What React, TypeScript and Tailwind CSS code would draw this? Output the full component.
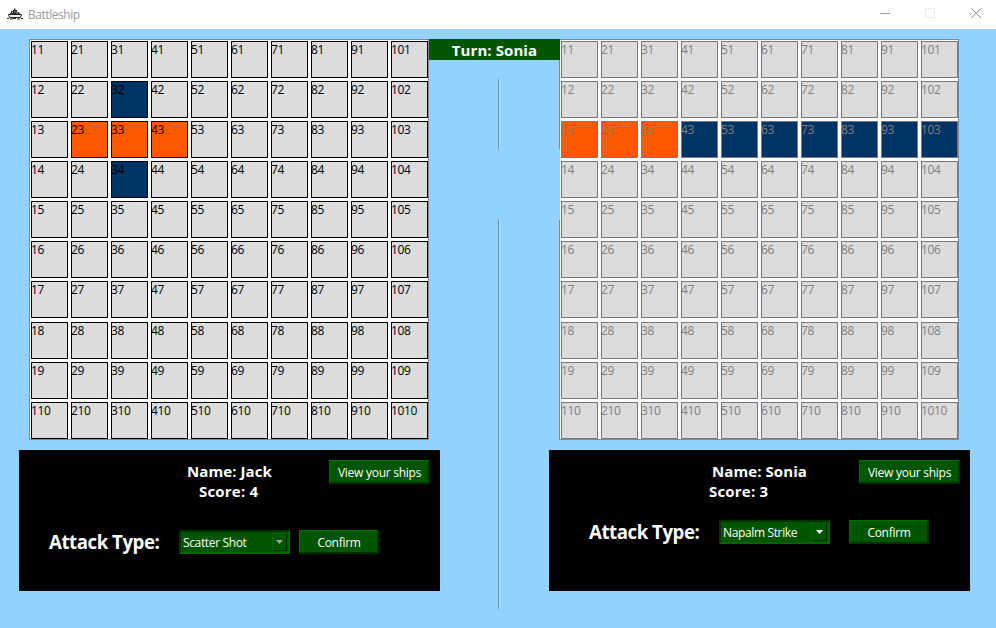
import React from "react";

const cols = [1, 2, 3, 4, 5, 6, 7, 8, 9, 10];
const upper = [1, 2, 3, 4, 5, 6, 7];
const lower = [8, 9, 10];

const HIT = "bg-[#ff5a00]";
const MISS = "bg-[#003366]";

type Marks = Record<string, string>;

const jackMarks: Marks = { "32": MISS, "34": MISS, "23": HIT, "33": HIT, "43": HIT };
const soniaMarks: Marks = {
  "13": HIT, "23": HIT, "33": HIT, "43": MISS, "53": MISS,
  "63": MISS, "73": MISS, "83": MISS, "93": MISS, "103": MISS,
};

function Board({ marks, disabled }: { marks: Marks; disabled?: boolean }) {
  const tone = disabled ? "border-[#787878] text-[#808080]" : "border-black text-black";
  const row = (r: number) => (
    <div key={r} className="flex gap-[3px]">
      {cols.map((c) => {
        const id = `${c}${r}`;
        const mark = marks[id];
        const edge = mark === HIT && disabled ? "border-[#787878] text-[#8c7a50]" : tone;
        return (
          <div
            key={c}
            className={`h-[37px] w-[37px] border -indent-px text-[12px] leading-[16px] tracking-[-0.4px] whitespace-nowrap ${edge} ${mark ?? "bg-[#dcdcdc]"}`}
          >
            {id}
          </div>
        );
      })}
    </div>
  );
  return (
    <div className="ml-[10px] flex h-[401px] w-[400px] flex-col gap-1 border border-[#828790] bg-white pt-px pl-px">
      <div className="flex flex-col gap-[3px]">{upper.map(row)}</div>
      <div className="flex flex-col gap-[3px]">{lower.map(row)}</div>
    </div>
  );
}

function Button({ children, className }: { children: React.ReactNode; className: string }) {
  return (
    <button
      className={`flex h-6 items-center justify-center border-t border-l border-r-2 border-b-2 border-t-[#006e00] border-l-[#006e00] border-r-[#003200] border-b-[#003200] bg-[#005500] pt-[3px] pl-px text-[12px] whitespace-nowrap text-white ${className}`}
    >
      {children}
    </button>
  );
}

function Combo({ value, muted }: { value: string; muted?: boolean }) {
  return (
    <div className="flex h-6 w-[111px] border-2 border-t-[#003200] border-r-[#006400] border-b-[#006400] border-l-[#003200] bg-[#005500] text-white">
      <span className="w-[91px] pt-[3px] pl-[2px] text-[12px] leading-[16px] tracking-[-0.36px] whitespace-nowrap">{value}</span>
      <span className="mt-[1px] flex h-[18px] w-[15px] items-center justify-center border border-t-[#006400] border-r-[#002800] border-b-[#002800] border-l-[#006400]">
        <svg width="7" height="4" viewBox="0 0 7 4" fill={muted ? "#a0a0a0" : "#ffffff"}>
          <path d="M0 0H7L3.5 4Z" />
        </svg>
      </span>
    </div>
  );
}

export default function App() {
  return (
    <div className="h-[628px] w-[996px] overflow-hidden bg-[#93d2fe] font-['Open_Sans','Noto_Sans',sans-serif]">
      <header className="flex h-[29px] items-center bg-white text-[#999999]">
        <svg className="ml-[7px] mb-[2px]" width="16" height="12" viewBox="0 0 16 12">
          <path d="M3 7V5H4V3H6V2H7V0.5H8.5V2H10V4H12V5H13V7Z" fill="#333333" />
          <path d="M5 4.5H6M7 3.5H8M9 5H11" stroke="#aaaaaa" />
          <path d="M1.5 6.5H14.5L13.5 9.5H2.5Z" fill="#eeeeee" stroke="#222222" />
          <path d="M0 10.5H2M3 11H6M6 10.5H9M10 11H13M14 10.5H16" stroke="#222222" />
        </svg>
        <span className="ml-[5px] text-[12px] leading-[16px] tracking-[-0.45px]">Battleship</span>
        <svg className="ml-auto mr-[14px] -mt-[3px]" width="102" height="12" viewBox="0 0 102 12" fill="none">
          <path d="M0 6.5H10" stroke="#999999" />
          <path d="M45.5 1.5H54.5V10.5H45.5Z" stroke="#eaeaea" />
          <path d="M91.5 1.5L101 11M101 1.5L91.5 11" stroke="#888888" />
        </svg>
      </header>

      <main className="flex pt-[10px] pl-[19px]">
        <section className="w-[421px]">
          <Board marks={jackMarks} />
          <div className="mt-[10px] h-[141px] bg-black pt-[10px] text-white">
            <div className="flex">
              <div className="ml-[168px] w-[142px] pt-px text-[15px] leading-5 font-bold tracking-[0.08px] whitespace-nowrap">
                <p>Name: Jack</p>
                <p className="pl-[12px] tracking-[0.2px]">Score: 4</p>
              </div>
              <Button className="w-[101px] tracking-[-0.26px]">View your ships</Button>
            </div>
            <div className="mt-[29px] flex">
              <span className="ml-[30px] w-[130px] text-[18.67px] leading-6 font-bold tracking-[-0.46px] whitespace-nowrap">Attack Type:</span>
              <Combo value="Scatter Shot" muted />
              <Button className="ml-[9px] w-[80px] tracking-[-0.3px]">Confirm</Button>
            </div>
          </div>
        </section>

        <section className="z-10 w-[109px]">
          <div className="-ml-[11px] h-[21px] w-[131px] bg-[#005500] pt-px text-center text-[15px] leading-[21px] font-bold tracking-[0.08px] text-white">
            Turn: Sonia
          </div>
          <div className="mt-[19px] ml-[58px] h-[70px] w-[2px] border-l border-[#648ea9] bg-[#b4e0fe]" />
          <div className="-mr-[11px] ml-auto h-[71px] w-px bg-[#93d2fe]" />
          <div className="ml-[58px] h-[389px] w-[2px] border-l border-[#648ea9] bg-[#b4e0fe]" />
        </section>

        <section className="w-[421px]">
          <Board marks={soniaMarks} disabled />
          <div className="mt-[10px] h-[141px] bg-black pt-[10px] text-white">
            <div className="flex">
              <div className="ml-[160px] w-[150px] pt-px text-[15px] leading-5 font-bold tracking-[0.08px] whitespace-nowrap">
                <p className="pl-[3px]">Name: Sonia</p>
                <p className="tracking-[0.2px]">Score: 3</p>
              </div>
              <Button className="w-[101px] tracking-[-0.26px]">View your ships</Button>
            </div>
            <div className="mt-[19px] flex">
              <span className="ml-[40px] w-[130px] text-[18.67px] leading-6 font-bold tracking-[-0.46px] whitespace-nowrap">Attack Type:</span>
              <Combo value="Napalm Strike" />
              <Button className="ml-[19px] w-[80px] tracking-[-0.3px]">Confirm</Button>
            </div>
          </div>
        </section>
      </main>
    </div>
  );
}
